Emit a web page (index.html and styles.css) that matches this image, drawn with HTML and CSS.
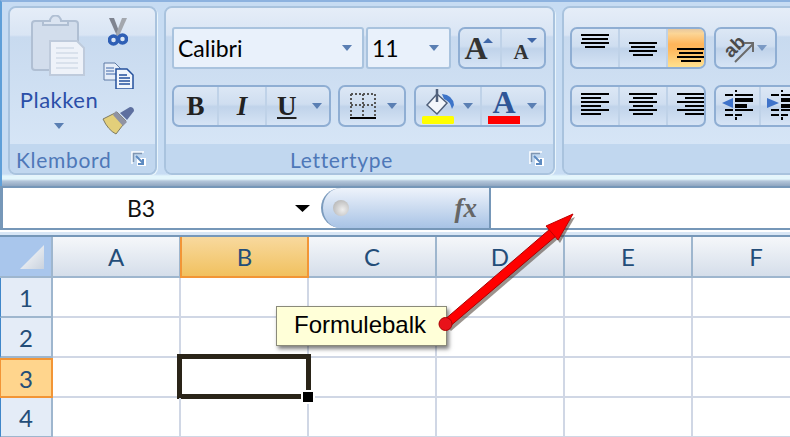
FILE: index.html
```html
<!DOCTYPE html>
<html lang="nl">
<head>
    <meta charset="UTF-8">
    <title>Formulebalk</title>
    <link rel="stylesheet" href="styles.css">
</head>
<body>
    <svg class="defs" width="0" height="0">
        <symbol id="caret" viewBox="0 0 10 6"><path d="M0 0H10L5 6Z" fill="#5a7fb3"/></symbol>
        <symbol id="launcher" viewBox="0 0 16 16">
            <path d="M1 13V1H13" fill="none" stroke="#fff" stroke-width="1.5"/>
            <path d="M2.5 11V2.5H11" fill="none" stroke="#7f96b2" stroke-width="1.5"/>
            <rect x="6" y="7" width="9" height="8" fill="#fff"/>
            <path d="M5 5L12 12M12 8V13H7" fill="none" stroke="#5d8ac0" stroke-width="2"/>
        </symbol>
    </svg>

    <!--ribbon-->
    <div class="ribbon">
        <section class="group group-clip">
            <div class="group-body clip-body">
                <div class="paste">
                    <svg class="paste-icon" width="60" height="66" viewBox="0 0 60 66">
                        <rect x="3" y="6" width="46" height="49" rx="3" fill="#d2ddec" stroke="#b0bfd3" stroke-width="2"/>
                        <path d="M14 10V6H21A5 5 0 0 1 32 6H39V10Z" fill="#dbe4f1" stroke="#b0bfd3" stroke-width="2"/>
                        <path d="M21 26H48L55 33V60H21Z" fill="#eef2f9" stroke="#bfcbdc" stroke-width="2"/>
                        <path d="M27 33H45M27 38H49M27 43H49M27 48H49M27 53H49" stroke="#d2dbe7" stroke-width="1.5"/>
                    </svg>
                    <span class="paste-label">Plakken</span>
                    <svg class="paste-caret" width="10" height="6"><use href="#caret"/></svg>
                </div>
                <div class="clip-tools">
                    <svg class="tool-cut" width="20" height="28" viewBox="0 0 20 28">
                        <path d="M1 0L6 0L12 16L9 18Z" fill="#7f8490"/>
                        <path d="M19 0L14 0L8 16L11 18Z" fill="#a3a7ae"/>
                        <circle cx="5.500" cy="22" r="4" fill="#dbe6f4" stroke="#2f5fb5" stroke-width="3.500"/>
                        <circle cx="14.500" cy="21" r="4" fill="#dbe6f4" stroke="#2f5fb5" stroke-width="3.500"/>
                    </svg>
                    <svg class="tool-copy" width="31" height="27" viewBox="0 0 31 27">
                        <path d="M1 1H12L17 6V18H1Z" fill="#e5edf8" stroke="#5f7ba5"/>
                        <path d="M3 6H11M3 9H11M3 12H14" stroke="#3f67a8"/>
                        <path d="M13 7H24L30 13V27H13Z" fill="#f2f6fc" stroke="#24509c" stroke-width="1.5"/>
                        <path d="M16 13H24M16 16H27M16 19H27M16 22H27" stroke="#24509c" stroke-width="1.5"/>
                    </svg>
                    <svg class="tool-brush" width="33" height="30" viewBox="0 0 33 30">
                        <path d="M1 13L15 6L24 15L14 28Q6 24 1 13Z" fill="#e3cf7a" stroke="#7d7a62"/>
                        <path d="M14 5L25 16L21 20L11 9Z" fill="#8f93a3"/>
                        <path d="M18 7L28 1Q32 1 32 5L25 14Z" fill="#5d6f9f"/>
                    </svg>
                </div>
            </div>
            <footer class="group-label">
                <span>Klembord</span>
                <svg class="launcher" width="16" height="16"><use href="#launcher"/></svg>
            </footer>
        </section>

        <section class="group group-font">
            <div class="group-body rows">
                <div class="row">
                    <div class="combo combo-name"><span>Calibri</span><svg width="10" height="6"><use href="#caret"/></svg></div>
                    <div class="combo combo-size"><span>11</span><svg width="10" height="6"><use href="#caret"/></svg></div>
                    <div class="btns btns-grow">
                        <div class="btn btn-half">
                            <span class="big-a">A</span>
                            <svg class="mini-caret" width="10" height="5" viewBox="0 0 10 5"><path d="M0 5H10L5 0Z" fill="#3f67a8"/></svg>
                        </div>
                        <div class="btn btn-half">
                            <span class="small-a">A</span>
                            <svg class="mini-caret" width="10" height="5" viewBox="0 0 10 5"><path d="M0 0H10L5 5Z" fill="#3f67a8"/></svg>
                        </div>
                    </div>
                </div>
                <div class="row">
                    <div class="btns btns-style">
                        <div class="btn btn-b"><b>B</b></div>
                        <div class="btn btn-i"><i>I</i></div>
                        <div class="btn btn-u"><u>U</u><svg width="10" height="6"><use href="#caret"/></svg></div>
                    </div>
                    <div class="btns btns-border">
                        <div class="btn btn-border">
                            <svg width="26" height="26" viewBox="0 0 26 26">
                                <path d="M1 1H25M1 12H25M1 1V23M13 1V23M25 1V23" fill="none" stroke="#555" stroke-width="2" stroke-dasharray="2 2"/>
                                <rect y="24" width="26" height="2"/>
                            </svg>
                            <svg width="10" height="6"><use href="#caret"/></svg>
                        </div>
                    </div>
                    <div class="btns btns-color">
                        <div class="btn btn-fill">
                            <svg width="32" height="35" viewBox="0 0 32 35">
                                <path d="M5 16L15 5L25 14L15 25Z" fill="#f4f7fb" stroke="#50607a" stroke-width="1.500"/>
                                <path d="M15 0V13" stroke="#50607a" stroke-width="2.500"/>
                                <path d="M20 5Q31 6 32 16L30 20Q28 12 22 10Z" fill="#3c74c9"/>
                                <rect y="27" width="32" height="8" rx="1.500" fill="#ff0"/>
                            </svg>
                            <svg width="10" height="6"><use href="#caret"/></svg>
                        </div>
                        <div class="btn btn-color">
                            <div class="color-a"><span>A</span><em></em></div>
                            <svg width="10" height="6"><use href="#caret"/></svg>
                        </div>
                    </div>
                </div>
            </div>
            <footer class="group-label group-label-font">
                <span>Lettertype</span>
                <svg class="launcher" width="16" height="16"><use href="#launcher"/></svg>
            </footer>
        </section>

        <section class="group group-align">
            <div class="group-body rows">
                <div class="row">
                    <div class="btns btns-align">
                        <div class="btn btn-line">
                            <svg width="46" height="38"><path d="M9 6H37M10 10H36M9 14H37M13 18H33" stroke="#000" stroke-width="2"/></svg>
                        </div>
                        <div class="btn btn-line">
                            <svg width="46" height="38"><path d="M9 14H37M11 18H35M9 22H37M13 26H33" stroke="#000" stroke-width="2"/></svg>
                        </div>
                        <div class="btn btn-line btn-on">
                            <svg width="46" height="38"><path d="M9 20H37M11 24H35M9 28H37M13 32H33" stroke="#000" stroke-width="2"/></svg>
                        </div>
                    </div>
                    <div class="btns btns-orient">
                        <div class="btn btn-orient">
                            <svg width="34" height="34" viewBox="0 0 34 34">
                                <text class="orient-text" x="13" y="22" text-anchor="middle" transform="rotate(-45 13 15)">ab</text>
                                <path d="M14 31L32 13M23 12H32V21" fill="none" stroke="#6b6b6b" stroke-width="2"/>
                            </svg>
                            <svg width="10" height="6" class="light-caret"><use href="#caret"/></svg>
                        </div>
                    </div>
                </div>
                <div class="row">
                    <div class="btns btns-align">
                        <div class="btn btn-line">
                            <svg width="46" height="38"><path d="M9 7H37M9 11H29M9 15H37M9 19H29M9 23H37M9 27H29" stroke="#000" stroke-width="2"/></svg>
                        </div>
                        <div class="btn btn-line">
                            <svg width="46" height="38"><path d="M9 7H37M13 11H33M9 15H37M13 19H33M9 23H37M13 27H33" stroke="#000" stroke-width="2"/></svg>
                        </div>
                        <div class="btn btn-line">
                            <svg width="46" height="38"><path d="M9 7H37M17 11H37M9 15H37M17 19H37M9 23H37M17 27H37" stroke="#000" stroke-width="2"/></svg>
                        </div>
                    </div>
                    <div class="btns btns-indent">
                        <div class="btn btn-line">
                            <svg width="43" height="38" viewBox="0 0 43 38">
                                <path d="M9 8H17M9 23H17M9 28H17M19 8H37M19 23H37M19 28H26" fill="none" stroke="#000" stroke-width="2"/>
                                <path d="M19 3H21V5H19ZM19 30H21V33H19Z"/>
                                <rect x="19" y="11" width="18" height="4"/>
                                <rect x="19" y="17" width="12" height="4"/>
                                <path d="M6 16L17 11V21Z" fill="#3f73c9"/>
                            </svg>
                        </div>
                        <div class="btn btn-line">
                            <svg width="43" height="38" viewBox="0 0 43 38">
                                <path d="M9 8H17M9 23H17M9 28H17M19 8H37M19 23H37M19 28H26" fill="none" stroke="#000" stroke-width="2"/>
                                <path d="M19 3H21V5H19ZM19 30H21V33H19Z"/>
                                <rect x="19" y="11" width="18" height="4"/>
                                <rect x="19" y="17" width="12" height="4"/>
                                <path d="M17 16L5 11V21Z" fill="#3f73c9"/>
                            </svg>
                        </div>
                    </div>
                </div>
            </div>
            <footer class="group-label"></footer>
        </section>
    </div>

    <!--formula bar-->
    <div class="formula-bar">
        <div class="name-box">
            <span class="name-text">B3</span>
            <svg width="15" height="7" viewBox="0 0 15 7"><path d="M0 0H15L7.500 7Z"/></svg>
        </div>
        <div class="fx-pill">
            <span class="fx-dot"></span>
            <span class="fx-text">fx</span>
        </div>
        <div class="formula-input"></div>
    </div>
    <div class="formula-gap"></div>

    <!--sheet-->
    <div class="sheet">
        <div class="corner"><span></span></div>
        <div class="col-head">A</div>
        <div class="col-head col-on">B</div>
        <div class="col-head">C</div>
        <div class="col-head">D</div>
        <div class="col-head">E</div>
        <div class="col-head">F</div>

        <div class="row-head">1</div>
        <div class="cell"></div><div class="cell"></div><div class="cell"></div><div class="cell"></div><div class="cell"></div><div class="cell"></div>

        <div class="row-head">2</div>
        <div class="cell"></div><div class="cell"></div><div class="cell"></div><div class="cell"></div><div class="cell"></div><div class="cell"></div>

        <div class="row-head row-on">3</div>
        <div class="cell"></div>
        <div class="cell cell-active"><span class="fill-handle"></span></div>
        <div class="cell"></div><div class="cell"></div><div class="cell"></div><div class="cell"></div>

        <div class="row-head">4</div>
        <div class="cell"></div><div class="cell"></div><div class="cell"></div><div class="cell"></div><div class="cell"></div><div class="cell"></div>
    </div>

    <!--annotation over the sheet-->
    <div class="callout">Formulebalk</div>
    <svg class="arrow" width="790" height="437" viewBox="0 0 790 437">
        <g fill="#4a3a30" opacity="0.55" transform="translate(2 3)">
            <path d="M442 321L550 228L556 236L449 328Z"/>
            <path d="M573 214L546 226L558 240Z"/>
        </g>
        <path d="M443 321L550 229L556 236L448 328Z" fill="#f00" stroke="#a80000"/>
        <path d="M573 214L546 226L558 240Z" fill="#f00" stroke="#c00000"/>
        <circle cx="445.500" cy="324" r="6.500" fill="#e8121a" stroke="#a80000"/>
    </svg>
</body>
</html>
```

FILE: styles.css
```css
*{
    margin:0;
    box-sizing: border-box;
}
html,body{
    width:790px;
    height:437px;
    overflow:hidden;
}
body{
    background:white;
    font-family: "Lato", "Liberation Sans", sans-serif;
    position:relative;
}
.defs{
    display:block;
    height:0;
}

/* ribbon */
.ribbon{
    height:186px;
    display:flex;
    gap:7px;
    padding:4px 0 0 6px;
    overflow:hidden;
    background:linear-gradient(#c7dcf3 0, #c7dcf3 172px, #e4f6fc 174px, #e4f6fc 177px, #b4c6da 179px, #8fa6c0 184px);
    border-top:2px solid #8db2df;
    border-left:2px solid #5f9fd8;
}
.group{
    height:169px;
    border:2px solid #a9c3de;
    border-radius:8px;
    display:flex;
    flex-direction:column;
    overflow:hidden;
    flex:none;
    box-shadow:1px 1px 0 #e8f4fb;
}
.group-clip{ width:149px; }
.group-font{ width:391px; }
.group-align{ width:300px; }
.group-body{
    height:136px;
    background:linear-gradient(#e5edf8 0, #d9e5f4 27px, #c8daef 29px, #d6e5f6 100%);
}
.group-label{
    flex:1;
    background:#c1d7ef;
    color:#4e78b8;
    font-size:21px;
    letter-spacing:0.7px;
    display:flex;
    align-items:center;
    justify-content:space-between;
    padding:2px 8px 0 6px;
}
.group-label-font{
    padding-left:124px;
}
.launcher{
    margin-bottom:2px;
}

/* klembord */
.clip-body{
    display:flex;
    padding:7px 0 0 8px;
}
.paste{
    width:82px;
    display:flex;
    flex-direction:column;
    align-items:center;
}
.paste-label{
    font-size:22px;
    color:#2b4fa8;
    letter-spacing:0.5px;
    margin-top:5px;
}
.paste-caret{
    margin-top:10px;
}
.clip-tools{
    display:flex;
    flex-direction:column;
    align-items:center;
    width:36px;
    padding-top:3px;
}
.tool-copy{
    margin-top:16px;
}
.tool-brush{
    margin-top:17px;
}

/* rows of buttons */
.rows{
    display:flex;
    flex-direction:column;
    gap:16px;
    padding:19px 0 0 6px;
}
.row{
    display:flex;
    height:42px;
}
.combo{
    height:42px;
    background:#e9f1fb;
    border:2px solid #a9c3de;
    border-radius:3px;
    display:flex;
    align-items:center;
    justify-content:space-between;
    font-size:23px;
    padding:0 10px 0 4px;
}
.combo-name{
    width:192px;
    margin-right:2px;
}
.combo-size{
    width:85px;
    margin-right:7px;
}
.btns{
    height:42px;
    display:flex;
    border:2px solid #8faed3;
    border-radius:7px;
    overflow:hidden;
    background:linear-gradient(#dce7f5 0, #cfdef0 45%, #c0d3ea 52%, #d6e4f5 100%);
}
.btn{
    display:flex;
    align-items:center;
    justify-content:center;
    border-right:2px solid #bfd2e8;
    height:100%;
    position:relative;
}
.btn:last-child{
    border-right:none;
}
.btns-grow{ width:88px; }
.btn-half{ width:50%; }
.big-a,.small-a{
    font-family:"Liberation Serif", serif;
    font-weight:bold;
    color:#333;
}
.big-a{
    font-size:32px;
    margin-right:8px;
}
.small-a{
    font-size:21px;
    margin-top:8px;
    margin-right:4px;
}
.mini-caret{
    position:absolute;
    top:9px;
    right:7px;
}
.btns-style{
    width:159px;
    margin-right:7px;
}
.btn-b{ width:45px; }
.btn-i{ width:48px; }
.btn-u{
    flex:1;
    justify-content:space-between;
    padding:0 7px 0 10px;
}
.btn-b b,.btn-i i,.btn-u u{
    font-family:"Liberation Serif", serif;
    font-size:27px;
    font-weight:bold;
    color:#222;
}
.btns-border{
    width:68px;
    margin-right:8px;
}
.btn-border{
    width:100%;
    justify-content:space-between;
    padding:0 7px 0 10px;
}
.btns-color{
    width:132px;
}
.btn-fill,.btn-color{
    justify-content:space-between;
    padding:0 7px 0 6px;
}
.btn-fill{ width:66px; }
.btn-color{ flex:1; }
.color-a{
    display:flex;
    flex-direction:column;
    align-items:center;
    width:32px;
}
.color-a span{
    font-family:"Liberation Serif", serif;
    font-weight:bold;
    font-size:32px;
    line-height:27px;
    color:#2f5597;
}
.color-a em{
    display:block;
    width:32px;
    height:8px;
    background:#f00;
}

/* alignment */
.btns-align{
    width:136px;
    margin-right:8px;
}
.btn-line{
    flex:1;
}
.btn-on{
    background:linear-gradient(#e8c9a0 0, #fbd596 12%, #ffb55a 40%, #ffb95e 55%, #ffe18f 100%);
    border:none;
}
.btns-orient{
    width:63px;
}
.btn-orient{
    width:100%;
    gap:2px;
    justify-content:flex-start;
    padding-left:5px;
}
.orient-text{
    font-family:"Liberation Sans", sans-serif;
    font-weight:bold;
    font-size:19px;
    fill:#4b4b4b;
}
.light-caret{
    opacity:0.7;
}
.btns-indent{
    width:100px;
}
.btns-indent .btn{
    flex:none;
    width:45px;
}

/* formula bar */
.formula-bar{
    height:44px;
    display:flex;
    border-top:2px solid #7697b8;
    border-bottom:2px solid #7697b8;
    border-left:3px solid #7697b8;
    background:white;
}
.name-box{
    width:318px;
    display:flex;
    align-items:center;
    font-size:23px;
    color:#111;
    padding-right:11px;
}
.name-text{
    width:292px;
    text-align:center;
    padding-right:16px;
}
.fx-pill{
    width:170px;
    height:100%;
    border-left:2px solid #7b9bbd;
    border-right:2px solid #7697b8;
    border-radius:20px 0 0 20px;
    background:linear-gradient(#eef3fb, #a8c3e5);
    display:flex;
    align-items:center;
    justify-content:space-between;
    padding:0 12px 0 10px;
}
.fx-dot{
    width:16px;
    height:16px;
    border-radius:50%;
    background:radial-gradient(circle at 60% 60%, #eee, #aaa);
}
.fx-text{
    font-family:"Liberation Serif", serif;
    font-style:italic;
    font-weight:bold;
    font-size:27px;
    color:#666;
}
.formula-input{
    flex:1;
}
.formula-gap{
    height:7px;
    background:linear-gradient(white 0, white 2px, #d8e6f5 2px);
    border-bottom:2px solid #7697b8;
}

/* sheet */
.sheet{
    display:grid;
    grid-template-columns:53px repeat(6, 128px);
    grid-template-rows:41px repeat(4, 40px);
    width:790px;
    overflow:hidden;
}
.corner{
    background:#a9c6ec;
    border-right:2px solid #9eb6ce;
    border-bottom:2px solid #9eb6ce;
    padding:8px 7px 7px 20px;
}
.corner span{
    display:block;
    width:100%;
    height:100%;
    clip-path:polygon(100% 0, 100% 100%, 0 100%);
    background:linear-gradient(135deg, #fff, #c9d2de);
}
.col-head,.row-head{
    display:flex;
    align-items:center;
    justify-content:center;
    font-size:24px;
    color:#244d78;
}
.col-head{
    background:linear-gradient(#f5f7fa, #d5deea);
    border-right:2px solid #9eb6ce;
    border-bottom:2px solid #9eb6ce;
}
.col-on{
    background:linear-gradient(#f8d99e, #f1c15f);
    border:2px solid #f29536;
    border-top:none;
    margin-left:-1px;
}
.row-head{
    background:#e4ecf7;
    border-right:2px solid #9eb6ce;
    border-bottom:2px solid #9eb6ce;
    border-left:1px solid #3f86c9;
}
.row-on{
    background:#ffd58d;
    border:2px solid #f29536;
    border-left:1px solid #f29536;
}
.cell{
    border-right:2px solid #d0d7e5;
    border-bottom:2px solid #d0d7e5;
    position:relative;
}
.cell-active::after{
    content:"";
    position:absolute;
    top:-4px;
    bottom:-3px;
    left:-4px;
    right:-4px;
    border:5px solid #2a2418;
}
.fill-handle{
    position:absolute;
    right:-8px;
    bottom:-8px;
    width:14px;
    height:14px;
    background:#000;
    border:2px solid white;
    z-index:2;
}

/* annotation */
.callout{
    position:absolute;
    left:276px;
    top:306px;
    width:171px;
    height:40px;
    background:#ffffd8;
    border:1px solid #8a8a7a;
    box-shadow:2px 3px 4px rgba(0, 0, 0, 0.5);
    font-family:"Liberation Sans", sans-serif;
    font-size:24px;
    line-height:36px;
    padding-left:17px;
    color:#000;
}
.arrow{
    position:absolute;
    left:0;
    top:0;
}
```
